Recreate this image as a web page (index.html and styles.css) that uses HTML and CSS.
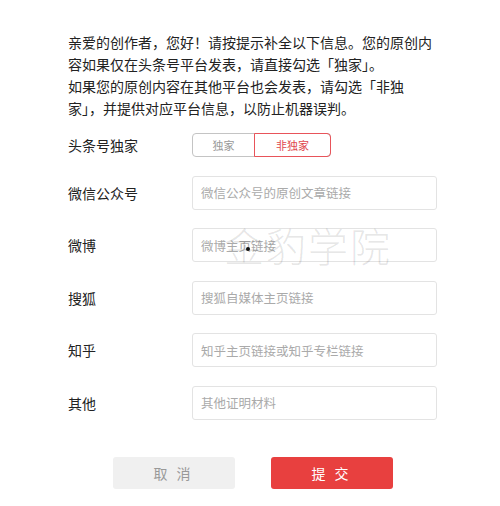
FILE: index.html
```html
<!DOCTYPE html>
<html lang="zh-CN">
<head>
    <meta charset="UTF-8">
    <meta name="viewport" content="width=device-width, initial-scale=1.0">
    <title>原创声明</title>
    <link rel="stylesheet" href="styles.css">
</head>
<body>
    <div class="panel">
        <div class="intro">
            <p>亲爱的创作者，您好！请按提示补全以下信息。您的原创内<br>容如果仅在头条号平台发表，请直接勾选「独家」。</p>
            <p>如果您的原创内容在其他平台也会发表，请勾选「非独<br>家」，并提供对应平台信息，以防止机器误判。</p>
        </div>

        <div class="form">
            <div class="row row-toggle">
                <label class="label">头条号独家</label>
                <div class="toggle">
                    <span class="toggle-item">独家</span>
                    <span class="toggle-item active">非独家</span>
                </div>
            </div>
            <div class="row">
                <label class="label">微信公众号</label>
                <input class="field" type="text" placeholder="微信公众号的原创文章链接">
            </div>
            <div class="row">
                <label class="label">微博</label>
                <input class="field" type="text" placeholder="微博主页链接">
                <span class="watermark">金豹学院</span>
                <span class="dot"></span>
            </div>
            <div class="row">
                <label class="label">搜狐</label>
                <input class="field" type="text" placeholder="搜狐自媒体主页链接">
            </div>
            <div class="row">
                <label class="label">知乎</label>
                <input class="field" type="text" placeholder="知乎主页链接或知乎专栏链接">
            </div>
            <div class="row">
                <label class="label">其他</label>
                <input class="field" type="text" placeholder="其他证明材料">
            </div>
        </div>

        <div class="actions">
            <button class="btn btn-cancel">取 消</button>
            <button class="btn btn-submit">提 交</button>
        </div>
    </div>
</body>
</html>
```

FILE: styles.css
```css
body {
    margin: 0;
    background-color: #ffffff;
    color: #222;
    font-family: "Noto Sans CJK SC", "Noto Sans", sans-serif;
}

.panel {
    width: 369px;
    padding: 31px 0 0 68px;
}

.intro {
    font-size: 14px;
    line-height: 22px;
    color: #222;
    margin-bottom: 14px;
}

.intro p {
    margin: 0;
    white-space: nowrap;
}

.form {
    display: flex;
    flex-direction: column;
    gap: 18.5px;
}

.row {
    position: relative;
    display: flex;
    align-items: center;
    height: 34px;
}

.row-toggle {
    height: 24px;
}

.label {
    width: 124px;
    flex-shrink: 0;
    font-size: 14px;
    color: #222;
}

.toggle {
    display: flex;
    height: 24px;
    width: 139px;
    box-sizing: border-box;
    border: 1px solid #c4c4c4;
    border-radius: 4px;
}

.toggle-item {
    flex: 1;
    display: flex;
    align-items: center;
    justify-content: center;
    font-size: 11px;
    color: #999;
}

.toggle-item.active {
    flex: 0 0 75px;
    margin: -1px -1px -1px 0;
    border: 1px solid #e8545a;
    border-radius: 0 4px 4px 0;
    color: #e0474d;
}

.field {
    width: 245px;
    height: 34px;
    box-sizing: border-box;
    border: 1px solid #e3e3e3;
    border-radius: 3px;
    padding: 0 8px;
    font-family: inherit;
    font-size: 12.5px;
    color: #333;
    outline: none;
}

.field::placeholder {
    color: #aaa;
}

.watermark {
    position: absolute;
    left: 156px;
    top: -12px;
    font-size: 40px;
    font-weight: 200;
    letter-spacing: 2px;
    color: rgba(0, 0, 0, 0.1);
    pointer-events: none;
    white-space: nowrap;
}

.dot {
    position: absolute;
    left: 178px;
    top: 19px;
    width: 4px;
    height: 4px;
    border-radius: 50%;
    background-color: #111;
}

.actions {
    display: flex;
    justify-content: center;
    gap: 36px;
    margin-top: 37px;
}

.btn {
    width: 122px;
    height: 32px;
    border: none;
    border-radius: 3px;
    font-family: inherit;
    font-size: 14px;
    letter-spacing: 3px;
}

.btn-cancel {
    background-color: #f0f0f0;
    color: #999;
}

.btn-submit {
    background-color: #e8403f;
    color: #fff;
}
```
